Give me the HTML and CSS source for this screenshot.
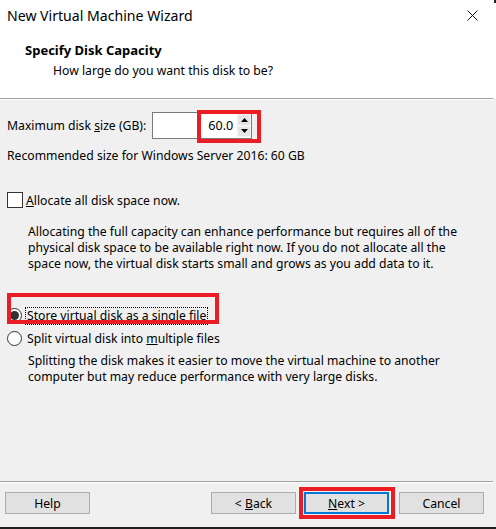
FILE: index.html
```html
<!DOCTYPE html>
<html>
<head>
<meta charset="utf-8">
<link rel="stylesheet" href="styles.css">
</head>
<body>
<div class="window">
  <div class="header">
    <div class="titlebar">
      <span class="title">New Virtual Machine Wizard</span>
      <svg class="close" width="11" height="11" viewBox="0 0 11 11"><path d="M0.5 0.5 L10.5 10.5 M10.5 0.5 L0.5 10.5" stroke="#111" stroke-width="1" fill="none"/></svg>
    </div>
    <div class="heading">Specify Disk Capacity</div>
    <div class="subheading">How large do you want this disk to be?</div>
  </div>
  <div class="sep"></div>
  <div class="content">
    <div class="size-row">
      <span>Maximum disk <u>s</u>ize (GB):</span>
      <div class="spin">
        <div class="spin-input">60.0</div>
        <div class="spin-buttons">
          <div class="spin-btn"><svg width="7" height="4" viewBox="0 0 7 4"><path d="M3.5 0 L7 4 L0 4 Z" fill="#000"/></svg></div>
          <div class="spin-btn"><svg width="7" height="4" viewBox="0 0 7 4"><path d="M0 0 L7 0 L3.5 4 Z" fill="#000"/></svg></div>
        </div>
        <div class="mark mark-spin"></div>
      </div>
    </div>
    <div class="recommended">Recommended size for Windows Server 2016: 60 GB</div>
    <div class="check-row">
      <span class="checkbox"></span>
      <span><u>A</u>llocate all disk space now.</span>
    </div>
    <p class="desc desc1">Allocating the full capacity can enhance performance but requires all of the<br>physical disk space to be available right now. If you do not allocate all the<br>space now, the virtual disk starts small and grows as you add data to it.</p>
    <div class="radio-row selected">
      <span class="radio on"><span class="dot"></span></span>
      <span class="focus">St<u>o</u>re virtual disk as a single file</span>
      <div class="mark mark-radio"></div>
    </div>
    <div class="radio-row">
      <span class="radio"></span>
      <span>Split virtual disk into <u>m</u>ultiple files</span>
    </div>
    <p class="desc desc2">Splitting the disk makes it easier to move the virtual machine to another<br>computer but may reduce performance with very large disks.</p>
  </div>
  <div class="sep"></div>
  <div class="buttons">
    <button class="btn">Help</button>
    <div class="spacer"></div>
    <button class="btn">&lt; <u>B</u>ack</button>
    <button class="btn btn-default"><u>N</u>ext &gt;<span class="mark mark-next"></span></button>
    <button class="btn btn-cancel">Cancel</button>
  </div>
  <div class="taskbar"></div>
</div>
</body>
</html>
```
FILE: styles.css
```css
* { box-sizing: border-box; }
html, body { margin: 0; padding: 0; }
body {
  width: 496px;
  height: 529px;
  overflow: hidden;
  background: #f0f0f0;
  font-family: "Noto Sans", "Open Sans", sans-serif;
  font-size: 12.2px;
  color: #000;
}
.window {
  position: relative;
  display: flex;
  flex-direction: column;
  height: 529px;
}
.window::after {
  content: "";
  position: absolute;
  right: 0;
  top: 0;
  width: 2px;
  height: 3px;
  background: #222;
}
.header {
  background: #fff;
  height: 98px;
  display: flex;
  flex-direction: column;
}
.titlebar {
  height: 32px;
  display: flex;
  align-items: center;
  justify-content: space-between;
  padding: 0 18px 0 7px;
}
.title {
  font-size: 14.1px;
  line-height: 20px;
  margin-top: -1px;
}
.close { display: block; margin-top: -2px; }
.heading {
  font-weight: bold;
  font-size: 13px;
  margin: 10px 0 0 25px;
  line-height: 16px;
}
.subheading {
  margin: 5px 0 0 53px;
  line-height: 16px;
}
.sep {
  height: 2px;
  border-top: 1px solid #a0a0a0;
  border-bottom: 1px solid #fff;
  margin-right: 3px;
}
.content {
  flex: 1;
  padding: 12px 0 0 7px;
  display: flex;
  flex-direction: column;
}
.size-row {
  display: flex;
  align-items: center;
  gap: 6px;
  height: 27px;
}
.spin {
  position: relative;
  display: flex;
  width: 100px;
  height: 27px;
  border: 1px solid #7a7a7a;
  background: #fff;
}
.spin-input {
  flex: 1;
  text-align: right;
  padding-right: 4px;
  line-height: 25px;
  font-size: 12.6px;
}
.spin-buttons {
  width: 14px;
  display: flex;
  flex-direction: column;
  padding: 1px 0;
}
.spin-btn {
  flex: 1;
  background: #e5e5e5;
  border: 1px solid #f4f4f4;
  display: flex;
  align-items: center;
  justify-content: center;
}
.mark {
  position: absolute;
  border: 4px solid #ec1c24;
  pointer-events: none;
}
.mark-spin {
  left: 44px;
  top: -3px;
  width: 64px;
  height: 33px;
}
.recommended {
  margin-top: 9px;
  line-height: 16px;
}
.check-row {
  margin-top: 28px;
  display: flex;
  align-items: center;
  gap: 3px;
  height: 16px;
}
.checkbox {
  width: 16px;
  height: 16px;
  border: 1px solid #333;
  background: #fff;
}
.desc {
  margin: 0;
  padding-left: 21px;
  line-height: 16px;
  white-space: nowrap;
}
.desc1 { margin-top: 16px; }
.radio-row {
  position: relative;
  display: flex;
  align-items: center;
  gap: 5px;
  height: 23px;
}
.radio-row.selected { margin-top: 32px; }
.radio {
  width: 15px;
  height: 15px;
  border: 1px solid #333;
  border-radius: 50%;
  background: #fff;
  display: flex;
  align-items: center;
  justify-content: center;
}
.radio .dot {
  width: 9px;
  height: 9px;
  border-radius: 50%;
  background: #333;
}
.focus {
  outline: 1px dotted #000;
  line-height: 16px;
  padding: 0 1px;
  margin-left: -1px;
}
.mark-radio {
  left: 0;
  top: -11px;
  width: 212px;
  height: 31px;
}
.desc2 { margin-top: 3px; }
.buttons {
  display: flex;
  align-items: flex-start;
  padding: 9px 12px 0 5px;
  height: 44px;
}
.spacer { flex: 1; }
.btn {
  position: relative;
  width: 85px;
  height: 22px;
  background: #e1e1e1;
  border: 1px solid #adadad;
  font-family: inherit;
  font-size: 12.2px;
  color: #000;
  padding: 0;
}
.btn-default {
  margin-left: 8px;
  border: 2px solid #0078d7;
}
.btn-cancel { margin-left: 10px; }
.mark-next {
  left: -7px;
  top: -7px;
  width: 96px;
  height: 32px;
}
.taskbar {
  height: 2px;
  background: #1f1f1f;
}
```
